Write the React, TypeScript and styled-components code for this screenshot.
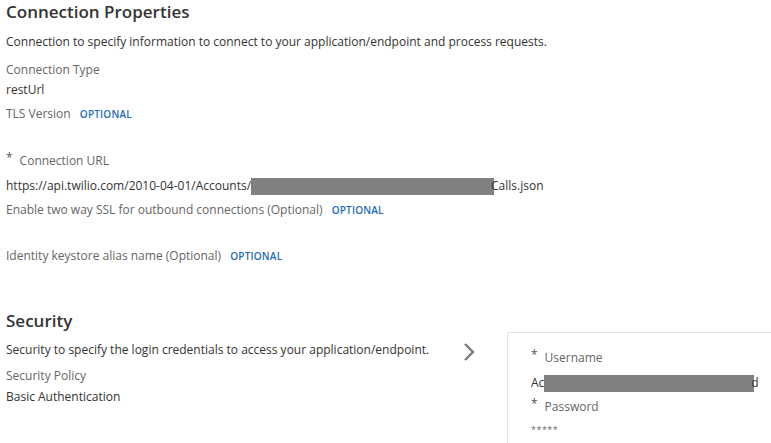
import React from 'react';
import styled, { createGlobalStyle } from 'styled-components';

const GlobalStyle = createGlobalStyle`
  html, body {
    margin: 0;
    padding: 0;
    background: #ffffff;
    overflow: hidden;
  }
  body {
    font-family: 'Open Sans', 'Noto Sans', sans-serif;
    font-size: 12px;
    color: #333333;
  }
`;

const Chevron = () => (
  <svg width="14" height="20" viewBox="0 0 14 20">
    <polyline points="3,2 11,10 3,18" fill="none" stroke="#7a7a7a" strokeWidth="2.4" />
  </svg>
);

const App = () => {
  return (
    <Page>
      <GlobalStyle />
      <Title>Connection Properties</Title>
      <Description>
        Connection to specify information to connect to your application/endpoint and process requests.
      </Description>
      <Label top={8}>Connection Type</Label>
      <Value>restUrl</Value>
      <Label top={4}>
        TLS Version <Optional>OPTIONAL</Optional>
      </Label>
      <Label top={27}>
        <Required>*</Required>Connection URL
      </Label>
      <Value top={5}>
        https://api.twilio.com/2010-04-01/Accounts/
        <Redact width={243} />
        Calls.json
      </Value>
      <Label top={4}>
        Enable two way SSL for outbound connections (Optional) <Optional>OPTIONAL</Optional>
      </Label>
      <Label top={26}>
        Identity keystore alias name (Optional) <Optional>OPTIONAL</Optional>
      </Label>

      <SecurityRow>
        <SecurityColumn>
          <Title>Security</Title>
          <Description top={7}>
            Security to specify the login credentials to access your application/endpoint.
          </Description>
          <Label top={6}>Security Policy</Label>
          <Value top={1}>Basic Authentication</Value>
        </SecurityColumn>
        <ChevronBox>
          <Chevron />
        </ChevronBox>
        <CredentialPanel>
          <Label>
            <Required>*</Required>Username
          </Label>
          <Value top={5}>
            Ac
            <Redact width={210} />
            d
          </Value>
          <Label top={4}>
            <Required>*</Required>Password
          </Label>
          <Stars>*****</Stars>
        </CredentialPanel>
      </SecurityRow>
    </Page>
  );
};

export default App;

const Page = styled.div`
  display: flex;
  flex-direction: column;
  padding-left: 6px;
  width: 765px;
`;

const Title = styled.h2`
  margin: 0;
  font-size: 17px;
  line-height: 24px;
  font-weight: 600;
  color: #333333;
`;

const Description = styled.div<{ top?: number }>`
  margin-top: ${(p) => p.top ?? 8}px;
  line-height: 20px;
  color: #333333;
`;

const Label = styled.div<{ top?: number }>`
  margin-top: ${(p) => p.top ?? 0}px;
  line-height: 20px;
  color: #666666;
  white-space: nowrap;
`;

const Value = styled.div<{ top?: number }>`
  margin-top: ${(p) => p.top ?? 0}px;
  line-height: 20px;
  color: #333333;
  white-space: nowrap;
`;

const Optional = styled.span`
  margin-left: 6px;
  font-size: 10px;
  font-weight: 600;
  color: #1f6bb5;
  letter-spacing: 0.2px;
`;

const Required = styled.span`
  display: inline-block;
  vertical-align: top;
  margin-top: -3px;
  margin-right: 7px;
  font-size: 12px;
  color: #555555;
`;

const Redact = styled.span<{ width: number }>`
  display: inline-block;
  vertical-align: middle;
  width: ${(p) => p.width}px;
  height: 17px;
  margin-right: -3px;
  background: #808080;
`;

const SecurityRow = styled.div`
  display: flex;
  align-items: flex-start;
  margin-top: 43px;
`;

const SecurityColumn = styled.div`
  display: flex;
  flex-direction: column;
  width: 456px;
`;

const ChevronBox = styled.div`
  margin-top: 33px;
  width: 45px;
`;

const CredentialPanel = styled.div`
  flex: 1;
  margin-top: 23px;
  padding: 15px 0 0 23px;
  height: 100px;
  border-top: 1px solid #e1e1e1;
  border-left: 1px solid #e1e1e1;
`;

const Stars = styled.div`
  margin-top: 3px;
  line-height: 20px;
  font-size: 9px;
  color: #666666;
  letter-spacing: 0.5px;
`;
